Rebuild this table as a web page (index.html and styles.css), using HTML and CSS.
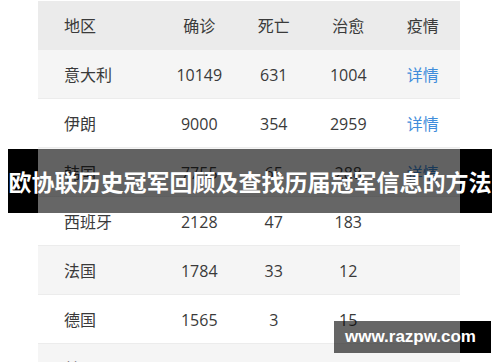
FILE: index.html
```html
<!DOCTYPE html>
<html lang="zh">
<head>
<meta charset="utf-8">
<title>欧协联历史冠军回顾及查找历届冠军信息的方法</title>
<link rel="stylesheet" href="styles.css">
</head>
<body>
<div class="page">
  <div class="table">
    <div class="row head">
      <div class="c name">地区</div><div class="c">确诊</div><div class="c">死亡</div><div class="c">治愈</div><div class="c">疫情</div>
    </div>
    <div class="row odd">
      <div class="c name">意大利</div><div class="c">10149</div><div class="c">631</div><div class="c">1004</div><div class="c link">详情</div>
    </div>
    <div class="row">
      <div class="c name">伊朗</div><div class="c">9000</div><div class="c">354</div><div class="c">2959</div><div class="c link">详情</div>
    </div>
    <div class="row odd">
      <div class="c name">韩国</div><div class="c">7755</div><div class="c">65</div><div class="c">288</div><div class="c link">详情</div>
    </div>
    <div class="row">
      <div class="c name">西班牙</div><div class="c">2128</div><div class="c">47</div><div class="c">183</div><div class="c"></div>
    </div>
    <div class="row odd">
      <div class="c name">法国</div><div class="c">1784</div><div class="c">33</div><div class="c">12</div><div class="c"></div>
    </div>
    <div class="row">
      <div class="c name">德国</div><div class="c">1565</div><div class="c">3</div><div class="c">15</div><div class="c"></div>
    </div>
    <div class="row odd">
      <div class="c name">美国</div><div class="c">1000</div><div class="c">31</div><div class="c">8</div><div class="c"></div>
    </div>
  </div>
  <div class="banner">欧协联历史冠军回顾及查找历届冠军信息的方法</div>
  <div class="mark">www.razpw.com</div>
</div>
</body>
</html>
```

FILE: styles.css
```css
html, body {
  margin: 0;
  padding: 0;
  background: #fff;
}
.page {
  position: relative;
  width: 500px;
  height: 362px;
  overflow: hidden;
  padding: 1px 40px 0 38px;
  box-sizing: border-box;
  font-family: "Open Sans", "Noto Sans CJK SC", sans-serif;
}
.table {
  width: 422px;
}
.row {
  display: grid;
  grid-template-columns: 124px repeat(4, 1fr);
  box-sizing: border-box;
  height: 49px;
  padding-top: 2px;
  border-bottom: 1px solid #ececec;
  background: #fff;
  align-items: center;
  font-size: 16px;
  color: #3a3a3a;
}
.row.head {
  background: #ebebeb;
  border-bottom: 1px solid #ebebeb;
}
.row.odd {
  background: #f5f5f5;
}
.c {
  text-align: center;
  line-height: 20px;
}
.c.name {
  text-align: left;
  padding-left: 26px;
}
.c.link {
  color: #3f8ddb;
}
.banner {
  position: absolute;
  left: 8px;
  top: 149px;
  width: 484px;
  height: 64px;
  line-height: 64px;
  background: linear-gradient(to right, #000 0, #000 30px, rgba(0,0,0,0.6) 30px, rgba(0,0,0,0.6) 452px, #000 452px);
  color: #fff;
  font-family: "Noto Sans CJK SC", sans-serif;
  font-size: 23px;
  font-weight: 700;
  white-space: nowrap;
  text-align: center;
}
.mark {
  position: absolute;
  left: 334px;
  top: 321px;
  width: 157px;
  height: 32px;
  line-height: 32px;
  padding-left: 11px;
  box-sizing: border-box;
  background: linear-gradient(to right, rgba(0,0,0,0.6) 0, rgba(0,0,0,0.6) 126px, #000 126px);
  color: #fff;
  font-family: "Liberation Sans", Arial, sans-serif;
  font-size: 17px;
  font-weight: 700;
  white-space: nowrap;
}
```
